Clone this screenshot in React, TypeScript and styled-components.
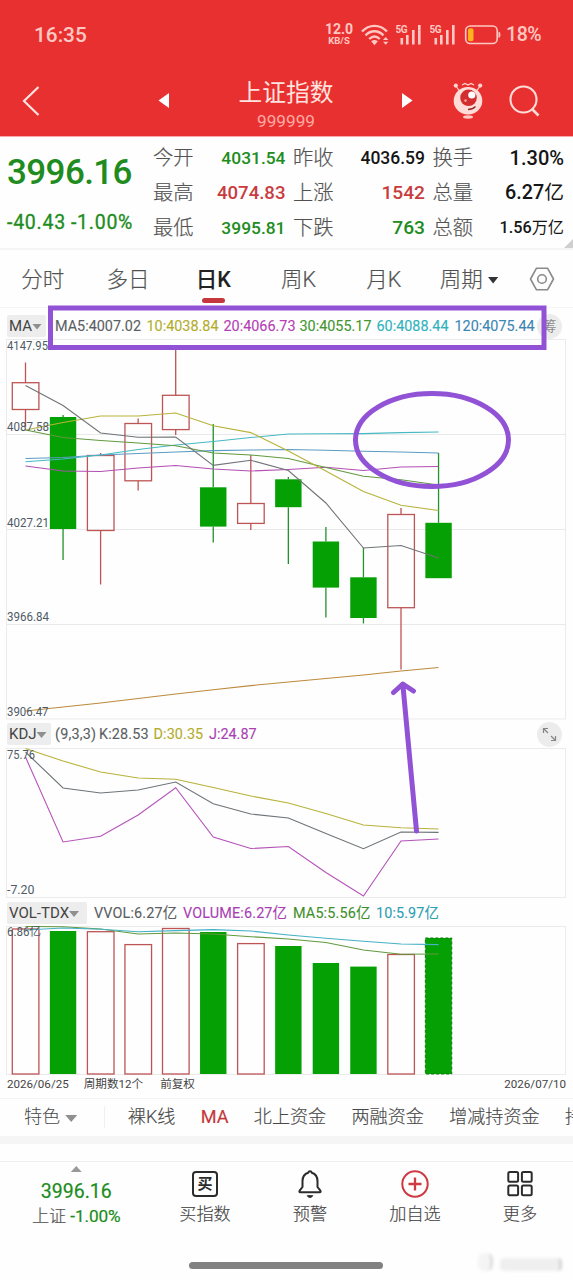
import React from "react";
import styled, { createGlobalStyle } from "styled-components";

const RED = "#e93030";
const INK = "#5b5f63";
const PURPLE = "#9152d6";

const Global = createGlobalStyle`
  * { box-sizing: border-box; }
  body { margin: 0; background: #fff; }
`;

const Screen = styled.main`
  position: relative;
  width: 573px;
  height: 1280px;
  overflow: hidden;
  display: flex;
  flex-direction: column;
  background: #fefefe;
  font-family: Roboto, "Noto Sans CJK SC", sans-serif;
  color: ${INK};
  white-space: nowrap;
  svg { display: block; flex: none; }
`;

/* ---------- header ---------- */
const Header = styled.header`
  height: 136px;
  background: ${RED};
  color: #ffe3df;
  display: flex;
  flex-direction: column;
`;
const StatusBar = styled.div`
  height: 68px;
  padding: 1px 32px 0 34px;
  display: flex;
  align-items: center;
  color: #ffc8c2;
`;
const Clock = styled.span`
  font-size: 20.8px;
  font-weight: 500;
  flex: 1;
`;
const NetSpeed = styled.span`
  display: flex;
  flex-direction: column;
  align-items: center;
  width: 30px;
  margin-right: 7px;
  font-weight: 700;
  font-size: 14px;
  line-height: 13px;
  small { font-size: 9.5px; line-height: 10px; }
`;
const Percent = styled.span`
  font-size: 19.5px;
  font-weight: 500;
  width: 35px;
  letter-spacing: -0.4px;
`;
const SignalPair = styled.span`
  display: flex;
  gap: 8px;
  margin: 0 0 0 6px;
`;
const TitleBar = styled.div`
  flex: 1;
  display: grid;
  grid-template-columns: 155px 263px 1fr;
  align-items: center;
  padding-bottom: 3px;
`;
const BackCell = styled.div`
  padding-left: 22px;
`;
const TitleCell = styled.div`
  display: flex;
  justify-content: space-between;
  align-items: center;
  padding: 0 5px 0 3px;
`;
const Title = styled.div`
  text-align: center;
  font-size: 23.7px;
  line-height: 30px;
  margin: 8px 0 0 1px;
  small {
    display: block;
    font-size: 17.2px;
    line-height: 20px;
    margin-top: 3px;
    color: #ffaaa4;
  }
`;
const Actions = styled.div`
  display: flex;
  align-items: center;
  gap: 25px;
  padding-left: 35px;
`;

/* ---------- quote ---------- */
const Quote = styled.section`
  height: 114px;
  border-top: 1px solid #f9a9a5;
  border-bottom: 2px solid #f4f4f4;
  display: grid;
  grid-template-columns: 153px 132.5px 139.5px 139px;
  position: relative;
`;
const Last = styled.div`
  padding: 15px 0 0 7px;
  color: #208c20;
  font-weight: 500;
`;
const Price = styled.div`
  font-size: 35px;
  line-height: 42px;
  letter-spacing: -0.6px;
`;
const Change = styled.div`
  font-size: 19.5px;
  line-height: 24px;
  margin-top: 17px;
  letter-spacing: 0.75px;
  word-spacing: -0.5px;
  font-weight: 400;
  -webkit-text-stroke: 0.3px #208c20;
`;
const StatColumn = styled.div<{ $inset: number }>`
  display: flex;
  flex-direction: column;
  padding: 3px 0 0 ${(p) => p.$inset}px;
`;
const Stat = styled.div`
  height: 35px;
  display: flex;
  align-items: center;
  justify-content: space-between;
`;
const StatLabel = styled.span`
  font-size: 20.3px;
  font-weight: 300;
  line-height: 28px;
  padding-top: 1px;
  color: #505050;
  -webkit-text-stroke: 0.2px #606060;
`;
const StatValue = styled.span<{ $color: string; $size: number }>`
  color: ${(p) => p.$color};
  font-size: ${(p) => p.$size}px;
  line-height: 28px;
  font-weight: 500;
`;
const Unit = styled.span`
  font-weight: 400;
`;
const Corner = styled.i`
  position: absolute;
  right: 0;
  bottom: 0;
  border-style: solid;
  border-width: 0 0 9px 9px;
  border-color: transparent transparent #cfcfcf transparent;
`;

/* ---------- period tabs ---------- */
const Tabs = styled.nav`
  height: 58px;
  display: flex;
  border-bottom: 1px solid #f5f5f5;
`;
const Tab = styled.div<{ $active?: boolean }>`
  width: 85.3px;
  display: flex;
  flex-direction: column;
  align-items: center;
  font-size: 21.5px;
  font-weight: ${(p) => (p.$active ? 500 : 300)};
  color: ${(p) => (p.$active ? "#222" : "#505050")};
  -webkit-text-stroke: ${(p) => (p.$active ? 0 : 0.2)}px #606060;
  line-height: 30px;
  padding-top: 15px;
  &::after {
    content: "";
    width: 23px;
    height: 5px;
    margin-top: 3px;
    border-radius: 3px;
    background: ${(p) => (p.$active ? "#c4373f" : "transparent")};
  }
  span { display: flex; align-items: center; gap: 5px; }
`;
const SettingsCell = styled.div`
  flex: 1;
  display: flex;
  justify-content: center;
  padding-top: 17px;
`;
const Caret = styled.i<{ $w: number; $h: number; $color: string; $up?: boolean }>`
  width: ${(p) => p.$w}px;
  height: ${(p) => p.$h}px;
  background: ${(p) => p.$color};
  clip-path: ${(p) => (p.$up ? "polygon(0 100%, 50% 0, 100% 100%)" : "polygon(0 0, 100% 0, 50% 100%)")};
`;

/* ---------- chart area ---------- */
const ChartArea = styled.section`
  position: relative;
  height: 790px;
`;
const Legend = styled.div<{ $h: number; $pad: number }>`
  height: ${(p) => p.$h}px;
  padding: ${(p) => p.$pad}px 11px 0 7px;
  display: flex;
  align-items: flex-start;
  font-size: 14.4px;
  line-height: 23px;
`;
const Picker = styled.button<{ $w: number }>`
  width: ${(p) => p.$w}px;
  height: 22px;
  padding: 0 0 0 2px;
  margin-right: auto;
  border: 0;
  border-radius: 2px;
  background: #ededed;
  color: #444;
  font: 400 15px/22px Roboto, sans-serif;
  display: flex;
  align-items: center;
  flex: none;
  i { margin-top: 2px; }
`;
const Entries = styled.div<{ $gap: number }>`
  display: flex;
  flex: 1;
  padding-left: ${(p) => p.$gap}px;
`;
const Entry = styled.span<{ $w: number; $color: string; $track?: number }>`
  width: ${(p) => p.$w}px;
  flex: none;
  color: ${(p) => p.$color};
  letter-spacing: ${(p) => p.$track ?? 0}px;
  -webkit-text-stroke: 0.1px currentColor;
`;
const Round = styled.span`
  width: 25px;
  height: 25px;
  margin-top: -1px;
  flex: none;
  border-radius: 50%;
  background: #ececec;
  color: #8b8b8b;
  display: flex;
  align-items: center;
  justify-content: center;
  font-size: 14px;
`;
const DateRow = styled.div`
  height: 18px;
  padding: 0 7px;
  display: flex;
  align-items: center;
  font-size: 11.6px;
  line-height: 16px;
  color: #444;
  gap: 15px;
  span:nth-child(3) { margin-left: 2px; }
  span:last-child { margin-left: auto; }
`;
const Overlay = styled.svg`
  position: absolute;
  left: 0;
  top: 0;
`;

/* ---------- feature strip ---------- */
const Features = styled.div`
  height: 46px;
  border-top: 1px solid #f4f4f4;
  border-bottom: 8px solid #f5f5f5;
  padding: 0 0 1px 24px;
  display: flex;
  align-items: center;
  gap: 25.3px;
  font-size: 18.1px;
  line-height: 26px;
  font-weight: 300;
  color: #484848;
  overflow: hidden;
`;
const Feature = styled.span<{ $active?: boolean }>`
  flex: none;
  font-weight: ${(p) => (p.$active ? 400 : 300)};
  color: ${(p) => (p.$active ? "#c5373b" : "inherit")};
  -webkit-text-stroke: 0.15px currentColor;
`;
const FeatureMenu = styled.span`
  flex: none;
  width: 81px;
  height: 22px;
  margin-right: -2.5px;
  display: flex;
  align-items: center;
  gap: 5px;
  border-right: 1px solid #f0f0f0;
  i { margin-top: 3px; }
`;

/* ---------- bottom bar ---------- */
const BottomBar = styled.footer`
  margin-top: 17px;
  height: 119px;
  border-top: 1px solid #efefef;
  display: grid;
  grid-template-columns: 152.5px repeat(4, 105px);
  align-content: start;
`;
const IndexCell = styled.div`
  display: flex;
  flex-direction: column;
  align-items: center;
  padding-top: 4px;
  color: #208c20;
  b { font-weight: 400; font-size: 19.5px; line-height: 24px; margin-top: 8px; -webkit-text-stroke: 0.2px; }
  span { font-size: 17.2px; line-height: 25px; -webkit-text-stroke: 0.2px; letter-spacing: -0.1px; }
  em { font-style: normal; font-weight: 300; color: #555; }
`;
const Action = styled.div`
  display: flex;
  flex-direction: column;
  align-items: center;
  padding-top: 8px;
  font-size: 17.2px;
  font-weight: 300;
  line-height: 24px;
  color: #444;
  -webkit-text-stroke: 0.15px currentColor;
  gap: 3.5px;
`;
const HomeBar = styled.div`
  position: absolute;
  left: 189px;
  top: 1262px;
  width: 194px;
  height: 6.5px;
  border-radius: 4px;
  background: #808080;
`;

/* ---------- data ---------- */
const GREEN = "#208c20";
const CRIMSON = "#c83c3f";
const BLACK = "#151515";
type Cell = [label: string, value: string, color: string, size: number, unit?: string];
const stats: Cell[][] = [
  [["今开", "4031.54", GREEN, 17.4], ["最高", "4074.83", CRIMSON, 18.6], ["最低", "3995.81", GREEN, 17.4]],
  [["昨收", "4036.59", BLACK, 17.5], ["上涨", "1542", CRIMSON, 19.2], ["下跌", "763", GREEN, 19.2]],
  [["换手", "1.30%", BLACK, 20], ["总量", "6.27", BLACK, 19.8, "亿"], ["总额", "1.56", BLACK, 16.2, "万亿"]],
];

const xAt = (i: number) => 25.5 + i * 37.55;
// [rising, high, top, bottom, low]
const candles: [boolean, number, number, number, number][] = [
  [true, 362.5, 382.7, 409.5, 427], [false, 415, 417, 529, 560], [true, 453, 455.5, 530.5, 584.5],
  [true, 418.5, 423.5, 480.8, 490.5], [true, 349, 395.3, 429.6, 435], [false, 424, 487.3, 526.6, 542.5],
  [true, 455, 503.5, 523.4, 530], [false, 477, 479.3, 507.2, 564], [false, 527, 541.5, 587.6, 617.5],
  [false, 547.5, 577.3, 618, 623.5], [true, 508, 514.5, 607.7, 669.5], [false, 453, 522.8, 578.2, 578.2],
];
const averages: [string, number[]][] = [
  ["#bd8a3c", [711, 707, 703, 698.5, 694, 689.8, 685.6, 682, 678.5, 675, 671, 667.5]],
  ["#5b9cc4", [458.5, 457.5, 455, 453.5, 452, 450.6, 450, 449.5, 450.3, 451.3, 452, 453]],
  ["#45b9c4", [461.7, 459, 455, 449.5, 445, 441.5, 437.5, 434, 433.8, 433.6, 432.6, 432]],
  ["#b34fb3", [466, 471, 471.5, 468, 465.5, 469, 471, 469.5, 467.3, 470.5, 467, 466.5]],
  ["#62993f", [430, 437.5, 440.5, 443, 445.8, 453, 455, 458.5, 467.5, 476.3, 479.7, 485]],
  ["#b8b23a", [430, 422.5, 416, 416, 413, 425.8, 432.6, 451, 471, 491.5, 505.3, 510.5]],
  ["#707477", [385.5, 405.5, 433, 437.3, 437, 465.4, 460.3, 470.5, 503, 548, 545.5, 558]],
];
const kdj: [string, number[]][] = [
  ["#b8b23a", [748.5, 761, 772, 778, 779.3, 787.5, 796, 803, 813.5, 825, 827.7, 829]],
  ["#6f7478", [752, 788, 793, 790, 782, 803.7, 814, 818, 833.5, 848.7, 832, 832.4]],
  ["#b553b8", [757, 842, 836.3, 815, 787.7, 837, 848.5, 846.5, 872.5, 896, 841, 839]],
];
const volumes = [929, 931, 931.7, 944.6, 928.5, 932, 943.6, 946, 963, 966.6, 954.5, 938];
const volumeAverages: [string, number[]][] = [
  ["#62993f", [926.5, 926.7, 929, 934, 933, 934, 936.7, 939, 942.5, 950, 954.3, 954]],
  ["#45b1c4", [930, 928, 929.3, 931.7, 930.6, 929.6, 931, 935, 938.3, 941.3, 944, 944.6]],
];
const points = (ys: number[]) => ys.map((y, i) => `${xAt(i)},${y}`).join(" ");

const Lines = ({ data }: { data: [string, number[]][] }) => (
  <>
    {data.map(([color, ys], i) => (
      <polyline key={i} points={points(ys)} fill="none" stroke={color} strokeWidth="1.1" />
    ))}
  </>
);
const Axis = ({ y, w, children }: { y: number; w: number; children: string }) => (
  <text x="7" y={y} fontSize="12" fill="#4e5b66" textLength={w} lengthAdjust="spacingAndGlyphs">{children}</text>
);
const Frame = ({ y, h }: { y: number; h: number }) => (
  <rect x="6.5" y={y} width="559" height={h} fill="none" stroke="#ebebeb" />
);

const PriceChart = () => (
  <svg width="573" height="381" viewBox="0 339 573 381">
    <Frame y={339.5} h={379.5} />
    <path d="M7 434.5H565M7 529.5H565M7 624.5H565" stroke="#e9e9e9" />
    {candles.map(([up, high, top, bottom, low], i) => (
      <g key={i} stroke={up ? "#bd5555" : "#22922a"} strokeWidth="1.3">
        <path d={`M${xAt(i)} ${high}V${top}M${xAt(i)} ${bottom}V${low}`} />
        {up ? (
          <rect x={xAt(i) - 13.2} y={top} width="26.6" height={bottom - top} fill="none" />
        ) : (
          <rect x={xAt(i) - 13.2} y={top} width="26.4" height={bottom - top} fill="#04a004" stroke="none" />
        )}
      </g>
    ))}
    <Lines data={averages} />
    <Axis y={350} w={41}>4147.95</Axis>
    <Axis y={431} w={42}>4087.58</Axis>
    <Axis y={526.5} w={42}>4027.21</Axis>
    <Axis y={621} w={42}>3966.84</Axis>
    <Axis y={716} w={41.5}>3906.47</Axis>
  </svg>
);

const KdjChart = () => (
  <svg width="573" height="150" viewBox="0 748 573 150">
    <Frame y={748.5} h={149} />
    <Lines data={kdj} />
    <Axis y={758.5} w={28}>75.76</Axis>
    <Axis y={894} w={27.5}>-7.20</Axis>
  </svg>
);

const VolumeChart = () => (
  <svg width="573" height="149" viewBox="0 926 573 149">
    <Frame y={926.5} h={148} />
    {volumes.map((top, i) =>
      candles[i][0] ? (
        <rect key={i} x={xAt(i) - 13.2} y={top} width="26.6" height={1074 - top} fill="none" stroke="#bd5555" strokeWidth="1.3" />
      ) : (
        <rect key={i} x={xAt(i) - 13.2} y={top} width="26.4" height={1074 - top} fill="#04a004"
          stroke={i === 11 ? "#0a7a0a" : "none"} strokeDasharray="3 2" />
      )
    )}
    <Lines data={volumeAverages} />
    <Axis y={936} w={34}>6.86亿</Axis>
  </svg>
);

const Signal = () => (
  <svg width="26" height="21" viewBox="0 0 26 21" fill="#ffc8c2">
    <text x="-0.5" y="8.5" fontSize="10" fontWeight="700" textLength="12">5G</text>
    <path d="M4.5 14h2.6v6.5h-2.6zM10 11h2.6v9.5h-2.6zM16 6h2.6v14.5h-2.6zM22 1h2.6v19.5h-2.6z" />
  </svg>
);

const Wifi = () => (
  <svg width="29" height="22" viewBox="0 0 29 22" fill="none" stroke="#ffc8c2" strokeWidth="2.4">
    <path d="M1 7.5C8 0 19 0 26 7.5M4.5 11.3C10 5.8 17 5.8 22.5 11.3M8.2 15C11.5 11.8 15.5 11.8 18.8 15" />
    <path d="M10.2 17.2q3.3-2.4 6.6 0l-3.3 4z" fill="#ffc8c2" stroke="none" />
    <path d="m22 16 2.7-3 2.7 3zM22 17.8l2.7 3 2.7-3z" fill="#ffc8c2" stroke="none" />
  </svg>
);

const Battery = () => (
  <svg width="50" height="20" viewBox="0 0 50 20">
    <rect x="9.7" y="1" width="31.5" height="17.5" rx="4.5" fill="none" stroke="#ffc8c2" strokeWidth="1.6" />
    <rect x="12" y="3.3" width="5.5" height="13" rx="2" fill="#ffb21c" />
    <path d="M42.5 6.5q2 .3 2 3.2t-2 3.2z" fill="#ffc8c2" />
  </svg>
);

const Mascot = () => (
  <svg width="30" height="37" viewBox="0 0 30 37">
    <path d="M3 4l4 6M27 4l-4 6M9 3l3-1.5 3 1.5 3-1.5 3 1.5" stroke="#ffd5d0" strokeWidth="1.2" fill="none" />
    <circle cx="2.8" cy="3.6" r="2.1" fill="#ffd5d0" />
    <circle cx="27.2" cy="3.6" r="2.1" fill="#ffd5d0" />
    <ellipse cx="15" cy="18.8" rx="14.3" ry="13.8" fill="#ffdcd8" />
    <ellipse cx="15" cy="35" rx="5" ry="1.7" fill="#ffc8c2" />
    <circle cx="15.5" cy="15.8" r="8.3" fill="#d22e30" />
    <circle cx="18.8" cy="13" r="3.6" fill="#fff" />
    <circle cx="12.5" cy="18.6" r="1.3" fill="#ff9c96" />
    <path d="M15 27.5q4.5 0 7.5-3" stroke="#8f2a2a" strokeWidth="1.3" fill="none" />
  </svg>
);

const BuyIcon = () => (
  <svg width="28" height="28" viewBox="0 0 28 28">
    <rect x="2" y="2" width="24" height="24" rx="3" fill="none" stroke="#2b2b2b" strokeWidth="2" />
    <text x="14" y="19.4" fontSize="15" fontWeight="700" textAnchor="middle" fill="#2b2b2b" stroke="none">买</text>
  </svg>
);
const BellIcon = () => (
  <svg width="28" height="28" viewBox="0 0 28 28" fill="none" stroke="#2b2b2b" strokeWidth="2" strokeLinejoin="round">
    <path d="M14 1.2c.9 0 1.6.6 1.8 1.5 3.4 1.1 5.7 4.3 5.7 8.3v6l2.9 3.7c.5.8.2 1.6-.7 1.6H4.3c-.9 0-1.2-.8-.7-1.6L6.5 17v-6c0-4 2.3-7.2 5.7-8.3.2-.9.9-1.5 1.8-1.5z" />
    <path d="M11.2 25.6h5.6q-.8 2-2.8 2t-2.8-2z" fill="#2b2b2b" strokeWidth=".8" />
  </svg>
);
const AddIcon = () => (
  <svg width="28" height="28" viewBox="0 0 28 28" fill="none" stroke="#cd3a42" strokeWidth="2">
    <circle cx="14" cy="14" r="12.7" />
    <path d="M14 7.5v13M7.5 14h13" strokeWidth="2.3" />
  </svg>
);
const MoreIcon = () => (
  <svg width="28" height="28" viewBox="0 0 28 28" fill="none" stroke="#2b2b2b" strokeWidth="2">
    <rect x="2.3" y="2" width="9.8" height="9.8" rx="1.5" />
    <rect x="15.9" y="2" width="9.8" height="9.8" rx="1.5" />
    <rect x="2.3" y="15.4" width="9.8" height="9.8" rx="1.5" />
    <rect x="15.9" y="15.4" width="9.8" height="9.8" rx="1.5" />
  </svg>
);

const Watermark = styled.div`
  position: absolute;
  left: 478px;
  top: 1252px;
  display: flex;
  align-items: center;
  gap: 7px;
  filter: blur(1.5px);
  i { width: 15px; height: 18px; border-radius: 6px; border-right: 3px solid #ddd; background: #f4f4f4; }
  b { width: 62px; height: 13px; margin-top: 6px; border-radius: 4px; background: #efefef; border-right: 3px solid #d6d6d6; }
`;

export default function App() {
  return (
    <Screen>
      <Global />
      <Header>
        <StatusBar>
          <Clock>16:35</Clock>
          <NetSpeed><span>12.0</span><small>KB/S</small></NetSpeed>
          <Wifi />
          <SignalPair><Signal /><Signal /></SignalPair>
          <Battery />
          <Percent>18%</Percent>
        </StatusBar>
        <TitleBar>
          <BackCell>
            <svg width="18" height="30" viewBox="0 0 18 30" fill="none" stroke="#ffe3df" strokeWidth="2.2">
              <path d="M16.5 1 2 15l14.5 14" />
            </svg>
          </BackCell>
          <TitleCell>
            <svg width="11" height="15" viewBox="0 0 11 15"><path d="M11 0v15L0.5 7.5z" fill="#fff" /></svg>
            <Title>上证指数<small>999999</small></Title>
            <svg width="11" height="15" viewBox="0 0 11 15"><path d="M0 0v15L10.5 7.5z" fill="#fff" /></svg>
          </TitleCell>
          <Actions>
            <Mascot />
            <svg width="33" height="32" viewBox="0 0 33 32" fill="none" stroke="#ffdcd8" strokeWidth="2.1">
              <circle cx="15.5" cy="14.5" r="13" />
              <path d="m24 24 6.5 6.5" strokeWidth="2.6" />
            </svg>
          </Actions>
        </TitleBar>
      </Header>

      <Quote>
        <Last>
          <Price>3996.16</Price>
          <Change>-40.43 -1.00%</Change>
        </Last>
        {stats.map((column, i) => (
          <StatColumn key={i} $inset={i === 0 ? 0 : 7.5}>
            {column.map(([label, value, color, size, unit]) => (
              <Stat key={label}>
                <StatLabel>{label}</StatLabel>
                <StatValue $color={color} $size={size}>{value}{unit && <Unit>{unit}</Unit>}</StatValue>
              </Stat>
            ))}
          </StatColumn>
        ))}
        <Corner />
      </Quote>

      <Tabs>
        <Tab>分时</Tab>
        <Tab>多日</Tab>
        <Tab $active>日K</Tab>
        <Tab>周K</Tab>
        <Tab>月K</Tab>
        <Tab><span>周期<Caret $w={11} $h={7} $color="#333" /></span></Tab>
        <SettingsCell>
          <svg width="26" height="24" viewBox="0 0 26 24" fill="none" stroke="#8a8a8a" strokeWidth="1.6">
            <path d="M7.5 1.2h11L24.5 12l-6 10.8h-11L1.5 12z" strokeLinejoin="round" />
            <circle cx="13" cy="12" r="4.3" />
          </svg>
        </SettingsCell>
      </Tabs>

      <ChartArea>
        <Legend $h={31} $pad={6.5}>
          <Picker $w={39}>MA<Caret $w={10} $h={6} $color="#8f8f8f" /></Picker>
          <Entries $gap={9}>
            <Entry $w={91.5} $color="#5b5f63">MA5:4007.02</Entry>
            <Entry $w={77} $color="#b3ad2c">10:4038.84</Entry>
            <Entry $w={76} $color="#b33fb5">20:4066.73</Entry>
            <Entry $w={77} $color="#43962f">30:4055.17</Entry>
            <Entry $w={78} $color="#2db3bd">60:4088.44</Entry>
            <Entry $w={80} $color="#3b86b3">120:4075.44</Entry>
          </Entries>
          <Round>筹</Round>
        </Legend>
        <PriceChart />
        <Legend $h={28} $pad={3}>
          <Picker $w={44}>KDJ<Caret $w={10} $h={6} $color="#8f8f8f" /></Picker>
          <Entries $gap={4}>
            <Entry $w={44} $color="#5b5f63" $track={0.2}>(9,3,3)</Entry>
            <Entry $w={54.5} $color="#5b5f63" $track={0.15}>K:28.53</Entry>
            <Entry $w={55.5} $color="#b3ad2c" $track={0.1}>D:30.35</Entry>
            <Entry $w={60} $color="#a83fb5">J:24.87</Entry>
          </Entries>
          <Round>
            <svg width="15" height="15" viewBox="0 0 15 15" fill="none" stroke="#858585" strokeWidth="1.2">
              <path d="M1.5 6V1.5H6M1.5 1.5l4.5 4.5M13.5 9v4.5H9M13.5 13.5 9 9" />
            </svg>
          </Round>
        </Legend>
        <KdjChart />
        <Legend $h={28} $pad={4}>
          <Picker $w={80}>VOL-TDX<Caret $w={10} $h={6} $color="#8f8f8f" /></Picker>
          <Entries $gap={7}>
            <Entry $w={89} $color="#5b5f63" $track={0.15}>VVOL:6.27亿</Entry>
            <Entry $w={110} $color="#a83fb5" $track={0.15}>VOLUME:6.27亿</Entry>
            <Entry $w={83} $color="#3f8f2c" $track={0.15}>MA5:5.56亿</Entry>
            <Entry $w={70} $color="#2f9fb3" $track={0.1}>10:5.97亿</Entry>
          </Entries>
        </Legend>
        <VolumeChart />
        <DateRow>
          <span>2026/06/25</span>
          <span>周期数12个</span>
          <span>前复权</span>
          <span>2026/07/10</span>
        </DateRow>
        <Overlay width="573" height="790" viewBox="0 308 573 790" fill="none" stroke={PURPLE} strokeWidth="5" overflow="visible">
          <rect x="50.5" y="308" width="493.5" height="39.5" />
          <ellipse cx="432" cy="440" rx="76.5" ry="46.5" />
          <path d="M416.5 831 402.8 684M393.5 692.5l9.3-8.5 10.7 7" strokeLinecap="round" strokeLinejoin="round" />
        </Overlay>
      </ChartArea>

      <Features>
        <FeatureMenu>特色<Caret $w={12} $h={7} $color="#8f8f8f" /></FeatureMenu>
        <Feature>裸K线</Feature>
        <Feature $active>MA</Feature>
        <Feature>北上资金</Feature>
        <Feature>两融资金</Feature>
        <Feature>增减持资金</Feature>
        <Feature>持</Feature>
      </Features>

      <BottomBar>
        <IndexCell>
          <Caret $w={11} $h={6} $color="#999" $up />
          <b>3996.16</b>
          <span><em>上证</em> -1.00%</span>
        </IndexCell>
        <Action><BuyIcon />买指数</Action>
        <Action><BellIcon />预警</Action>
        <Action><AddIcon />加自选</Action>
        <Action><MoreIcon />更多</Action>
      </BottomBar>
      <HomeBar />
      <Watermark><i /><b /></Watermark>
    </Screen>
  );
}
